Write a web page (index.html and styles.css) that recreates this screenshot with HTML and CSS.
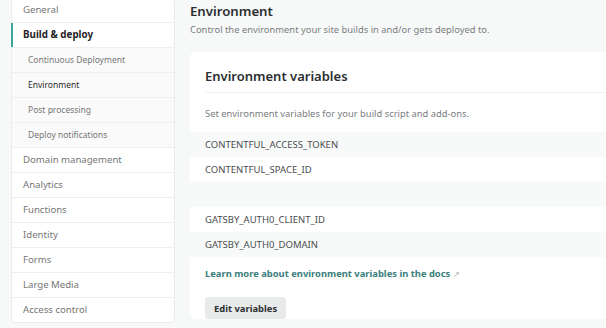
FILE: index.html
```html
<!DOCTYPE html>
<html lang="en">
<head>
  <meta charset="UTF-8" />
  <meta name="viewport" content="width=device-width, initial-scale=1.0" />
  <title>Build & deploy settings - Environment</title>
  <link rel="stylesheet" href="styles.css">
</head>
<body>
  <div class="page">
    <nav class="sidebar">
      <a class="nav-item">General</a>
      <a class="nav-item active">Build &amp; deploy</a>
      <a class="nav-sub">Continuous Deployment</a>
      <a class="nav-sub current">Environment</a>
      <a class="nav-sub">Post processing</a>
      <a class="nav-sub">Deploy notifications</a>
      <a class="nav-item">Domain management</a>
      <a class="nav-item">Analytics</a>
      <a class="nav-item">Functions</a>
      <a class="nav-item">Identity</a>
      <a class="nav-item">Forms</a>
      <a class="nav-item">Large Media</a>
      <a class="nav-item last">Access control</a>
    </nav>

    <main class="content">
      <h1>Environment</h1>
      <p class="lead">Control the environment your site builds in and/or gets deployed to.</p>

      <section class="card">
        <h2 class="card-title">Environment variables</h2>
        <div class="card-body">
          <p class="hint">Set environment variables for your build script and add-ons.</p>
        </div>
        <ul class="vars">
          <li>CONTENTFUL_ACCESS_TOKEN</li>
          <li>CONTENTFUL_SPACE_ID</li>
          <li></li>
          <li>GATSBY_AUTH0_CLIENT_ID</li>
          <li>GATSBY_AUTH0_DOMAIN</li>
        </ul>
        <div class="card-body">
          <a class="docs-link">Learn more about environment variables in the docs <span class="ext">&#8599;</span></a>
          <button class="btn">Edit variables</button>
        </div>
      </section>
    </main>
  </div>
</body>
</html>
```

FILE: styles.css
```css
body {
  margin: 0;
  font-family: 'Noto Sans', 'Open Sans', sans-serif;
  background-color: #f7f9f9;
  color: #333;
  overflow: hidden;
}

.page {
  display: flex;
  align-items: flex-start;
  margin-top: -3px;
  padding-left: 11px;
}

/* sidebar */
.sidebar {
  flex: none;
  display: flex;
  flex-direction: column;
  width: 162px;
  background: #fff;
  border: 1px solid #ececec;
  border-radius: 4px;
}

.nav-item,
.nav-sub {
  display: block;
  height: 24px;
  line-height: 24px;
  border-bottom: 1px solid #efefef;
  color: #767676;
  font-size: 9.6px;
  padding-left: 11px;
  white-space: nowrap;
}

.nav-item.last {
  border-bottom: none;
}

.nav-item.active {
  color: #1f2224;
  font-weight: bold;
  font-size: 9.8px;
  box-shadow: inset 2px 0 0 #3ba59c;
  margin-left: -1px;
  padding-left: 12px;
}

.nav-sub {
  background: #fafafa;
  font-size: 8.5px;
  padding-left: 16px;
}

.nav-sub.current {
  color: #2b2b2b;
}

/* main */
.content {
  flex: 1;
  margin-left: 15px;
  margin-right: -20px;
  padding-top: 4px;
}

h1 {
  margin: 0;
  font-size: 13.2px;
  line-height: 20px;
  font-weight: 600;
  color: #2b2e30;
}

.lead {
  margin: 2px 0 0;
  font-size: 9.4px;
  line-height: 14px;
  color: #7a7d7f;
}

.card {
  margin-top: 15px;
  background: #fff;
  border-radius: 5px;
}

.card-title {
  margin: 0 0 0 15px;
  padding: 14px 0 6px;
  font-size: 13px;
  line-height: 20px;
  font-weight: 600;
  color: #2b2e30;
  border-bottom: 1px solid #f0f0f0;
}

.card-body {
  padding: 0 15px;
}

.hint {
  margin: 14px 0 11px;
  font-size: 9.4px;
  line-height: 14px;
  color: #7a7d7f;
}

.vars {
  list-style: none;
  margin: 0;
  padding: 0;
}

.vars li {
  height: 25px;
  line-height: 25px;
  padding-left: 15px;
  font-size: 9.5px;
  color: #4a4d4f;
}

.vars li:nth-child(odd) {
  background: #f8f9f9;
}

.docs-link {
  display: block;
  margin-top: 10px;
  font-size: 9.4px;
  line-height: 14px;
  font-weight: bold;
  color: #3a7d7b;
}

.ext {
  color: #b0b0b0;
  font-weight: normal;
  font-size: 8px;
}

.btn {
  display: block;
  margin-top: 16px;
  height: 22px;
  padding: 0 9px;
  border: none;
  border-radius: 3px;
  background: #e9ebeb;
  font-family: inherit;
  font-size: 9.4px;
  font-weight: bold;
  color: #2b2e30;
}
```
